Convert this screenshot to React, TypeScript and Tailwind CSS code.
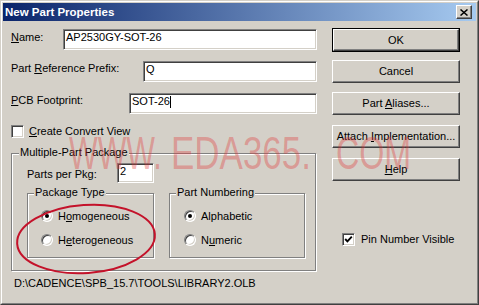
import React from "react";

const sunken =
  "border border-t-[#808080] border-l-[#808080] border-b-white border-r-white shadow-[inset_1px_1px_0_#404040,inset_-1px_-1px_0_#d4d0c8] bg-white";
const raised =
  "border border-t-white border-l-white border-b-[#404040] border-r-[#404040] shadow-[inset_-1px_-1px_0_#808080] bg-[#d4d0c8]";
const etched =
  "relative border border-[#808080] shadow-[inset_1px_1px_0_#ffffff,1px_1px_0_#ffffff]";

function Field({ w, value, caret }: { w: string; value: string; caret?: boolean }) {
  return (
    <div className={`${sunken} ${w} h-[21px] flex items-start pl-[2px] pt-[1px]`}>
      <span className="leading-[13px]">{value}</span>
      {caret && <span className="w-px h-[12px] bg-black mt-[1px]" />}
    </div>
  );
}

function Button({ children, def, mt }: { children: React.ReactNode; def?: boolean; mt: string }) {
  if (def) {
    return (
      <div className={`${mt} w-[128px] h-[24px] border border-black`}>
        <div className={`${raised} h-full flex items-center justify-center`}>{children}</div>
      </div>
    );
  }
  return (
    <div className={`${mt} ${raised} w-[128px] h-[23px] flex items-center justify-center`}>{children}</div>
  );
}

function Check({ checked }: { checked?: boolean }) {
  return (
    <div className={`${sunken} w-[13px] h-[13px] shrink-0 flex items-center justify-center`}>
      {checked && (
        <svg width="9" height="9" viewBox="0 0 9 9">
          <path d="M1.2 4 L3.4 6.3 L7.8 1.6" fill="none" stroke="black" strokeWidth="1.9" />
        </svg>
      )}
    </div>
  );
}

function Radio({ on }: { on?: boolean }) {
  return (
    <div className="w-[12px] h-[12px] shrink-0 rounded-full border border-t-[#808080] border-l-[#808080] border-b-white border-r-white shadow-[inset_1px_1px_0_#404040,inset_-1px_-1px_0_#d4d0c8] bg-white flex items-center justify-center">
      {on && <div className="w-[4px] h-[4px] rounded-full bg-black" />}
    </div>
  );
}

export default function App() {
  return (
    <div className="relative w-[479px] h-[305px] overflow-hidden bg-[#d4d0c8] text-black text-[11px] leading-[13px] font-['Liberation_Sans',Arial,sans-serif] border border-t-[#d4d0c8] border-l-[#d4d0c8] border-r-[#404040] border-b-[#404040]">
      <div className="h-full p-px border border-t-white border-l-white border-r-[#808080] border-b-[#808080] flex flex-col">
        {/* Title bar */}
        <div className="h-[18px] shrink-0 flex items-center pl-[2px] bg-[linear-gradient(to_right,#0a246a,#a6caf0)]">
          <span className="text-white font-bold text-[11.5px] leading-[14px]">New Part Properties</span>
          <div className={`${raised} ml-auto mr-[4px] w-[16px] h-[14px] flex items-center justify-center`}>
            <svg width="8" height="7" viewBox="0 0 8 7">
              <path d="M0.5 0.5 L7.5 6.5 M7.5 0.5 L0.5 6.5" stroke="black" strokeWidth="1.5" />
            </svg>
          </div>
        </div>

        {/* Body */}
        <div className="flex flex-1">
          {/* Left column */}
          <div className="ml-[8px] w-[306px] pt-[8px] flex flex-col">
            <div className="h-[21px] flex items-start">
              <span className="pt-[2px]">
                <span className="underline">N</span>ame:
              </span>
              <div className="ml-auto">
                <Field w="w-[254px]" value="AP2530GY-SOT-26" />
              </div>
            </div>
            <div className="mt-[11px] h-[21px] flex items-start">
              <span className="pt-[1px]">
                Part <span className="underline">R</span>eference Prefix:
              </span>
              <div className="ml-auto">
                <Field w="w-[174px]" value="Q" />
              </div>
            </div>
            <div className="mt-[11px] h-[21px] flex items-start">
              <span className="pt-[1px]">
                <span className="underline">P</span>CB Footprint:
              </span>
              <div className="ml-auto">
                <Field w="w-[188px]" value="SOT-26" caret />
              </div>
            </div>
            <div className="mt-[11px] h-[13px] flex items-center">
              <Check />
              <span className="ml-[5px]">
                <span className="underline">C</span>reate Convert View
              </span>
            </div>

            {/* Multiple-Part Package */}
            <div className={`${etched} mt-[15px] w-[305px] h-[118px] pl-[15px] pt-[9px]`}>
              <span className="absolute left-[7px] top-[-8px] px-px bg-[#d4d0c8]">Multiple-Part Package</span>
              <div className="flex items-start h-[20px]">
                <span className="w-[90px] pt-[5px]">Parts per Pkg:</span>
                <div className={`${sunken} w-[37px] h-[20px] pl-[2px] pt-[1px]`}>2</div>
              </div>
              <div className="mt-[10px] flex">
                <div className={`${etched} w-[127px] h-[65px] pl-[13px] pt-[16px]`}>
                  <span className="absolute left-[6px] top-[-8px] px-px bg-[#d4d0c8]">Package Type</span>
                  <div className="flex flex-col gap-[12px]">
                    <div className="h-[12px] flex items-center">
                      <Radio on />
                      <span className="ml-[5px]">
                        H<span className="underline">o</span>mogeneous
                      </span>
                    </div>
                    <div className="h-[12px] flex items-center">
                      <Radio />
                      <span className="ml-[5px]">
                        H<span className="underline">e</span>terogeneous
                      </span>
                    </div>
                  </div>
                </div>
                <div className={`${etched} ml-[15px] w-[136px] h-[65px] pl-[14px] pt-[16px]`}>
                  <span className="absolute left-[6px] top-[-8px] px-px bg-[#d4d0c8]">Part Numbering</span>
                  <div className="flex flex-col gap-[12px]">
                    <div className="h-[12px] flex items-center">
                      <Radio on />
                      <span className="ml-[5px]">Alphabetic</span>
                    </div>
                    <div className="h-[12px] flex items-center">
                      <Radio />
                      <span className="ml-[5px]">
                        N<span className="underline">u</span>meric
                      </span>
                    </div>
                  </div>
                </div>
              </div>
            </div>

            <div className="mt-[6px] ml-[3px] whitespace-nowrap">D:\CADENCE\SPB_15.7\TOOLS\LIBRARY2.OLB</div>
          </div>

          {/* Right column */}
          <div className="ml-[15px] flex flex-col">
            <Button def mt="mt-[7px]">OK</Button>
            <Button mt="mt-[8px]">Cancel</Button>
            <Button mt="mt-[9px]">
              <span>
                Part <span className="underline">A</span>liases...
              </span>
            </Button>
            <Button mt="mt-[10px]">
              <span>
                Attach <span className="underline">I</span>mplementation...
              </span>
            </Button>
            <Button mt="mt-[10px]">
              <span>
                <span className="underline">H</span>elp
              </span>
            </Button>
            <div className="mt-[52px] pl-[10px] h-[13px] flex items-center">
              <Check checked />
              <span className="ml-[6px]">Pin Number Visible</span>
            </div>
          </div>
        </div>
      </div>

      {/* Watermark */}
      <div className="pointer-events-none absolute left-[68px] top-[129px] flex whitespace-nowrap text-[46px] leading-[46px] font-['Liberation_Sans',Arial,sans-serif] text-[rgba(225,55,55,0.36)]">
        <div className="w-[102px]">
          <span className="inline-block origin-left scale-x-[0.66]">WWW.</span>
        </div>
        <div className="w-[165px]">
          <span className="inline-block origin-left scale-x-[0.76]">EDA365.</span>
        </div>
        <div>
          <span className="inline-block origin-left scale-x-[0.7]">COM</span>
        </div>
      </div>

      {/* Red ellipse annotation */}
      <svg className="pointer-events-none absolute left-0 top-0" width="479" height="305" viewBox="0 0 479 305">
        <ellipse cx="85" cy="238" rx="69" ry="34" transform="rotate(-4 85 238)" fill="none" stroke="#c4122a" strokeWidth="2" />
      </svg>
    </div>
  );
}
